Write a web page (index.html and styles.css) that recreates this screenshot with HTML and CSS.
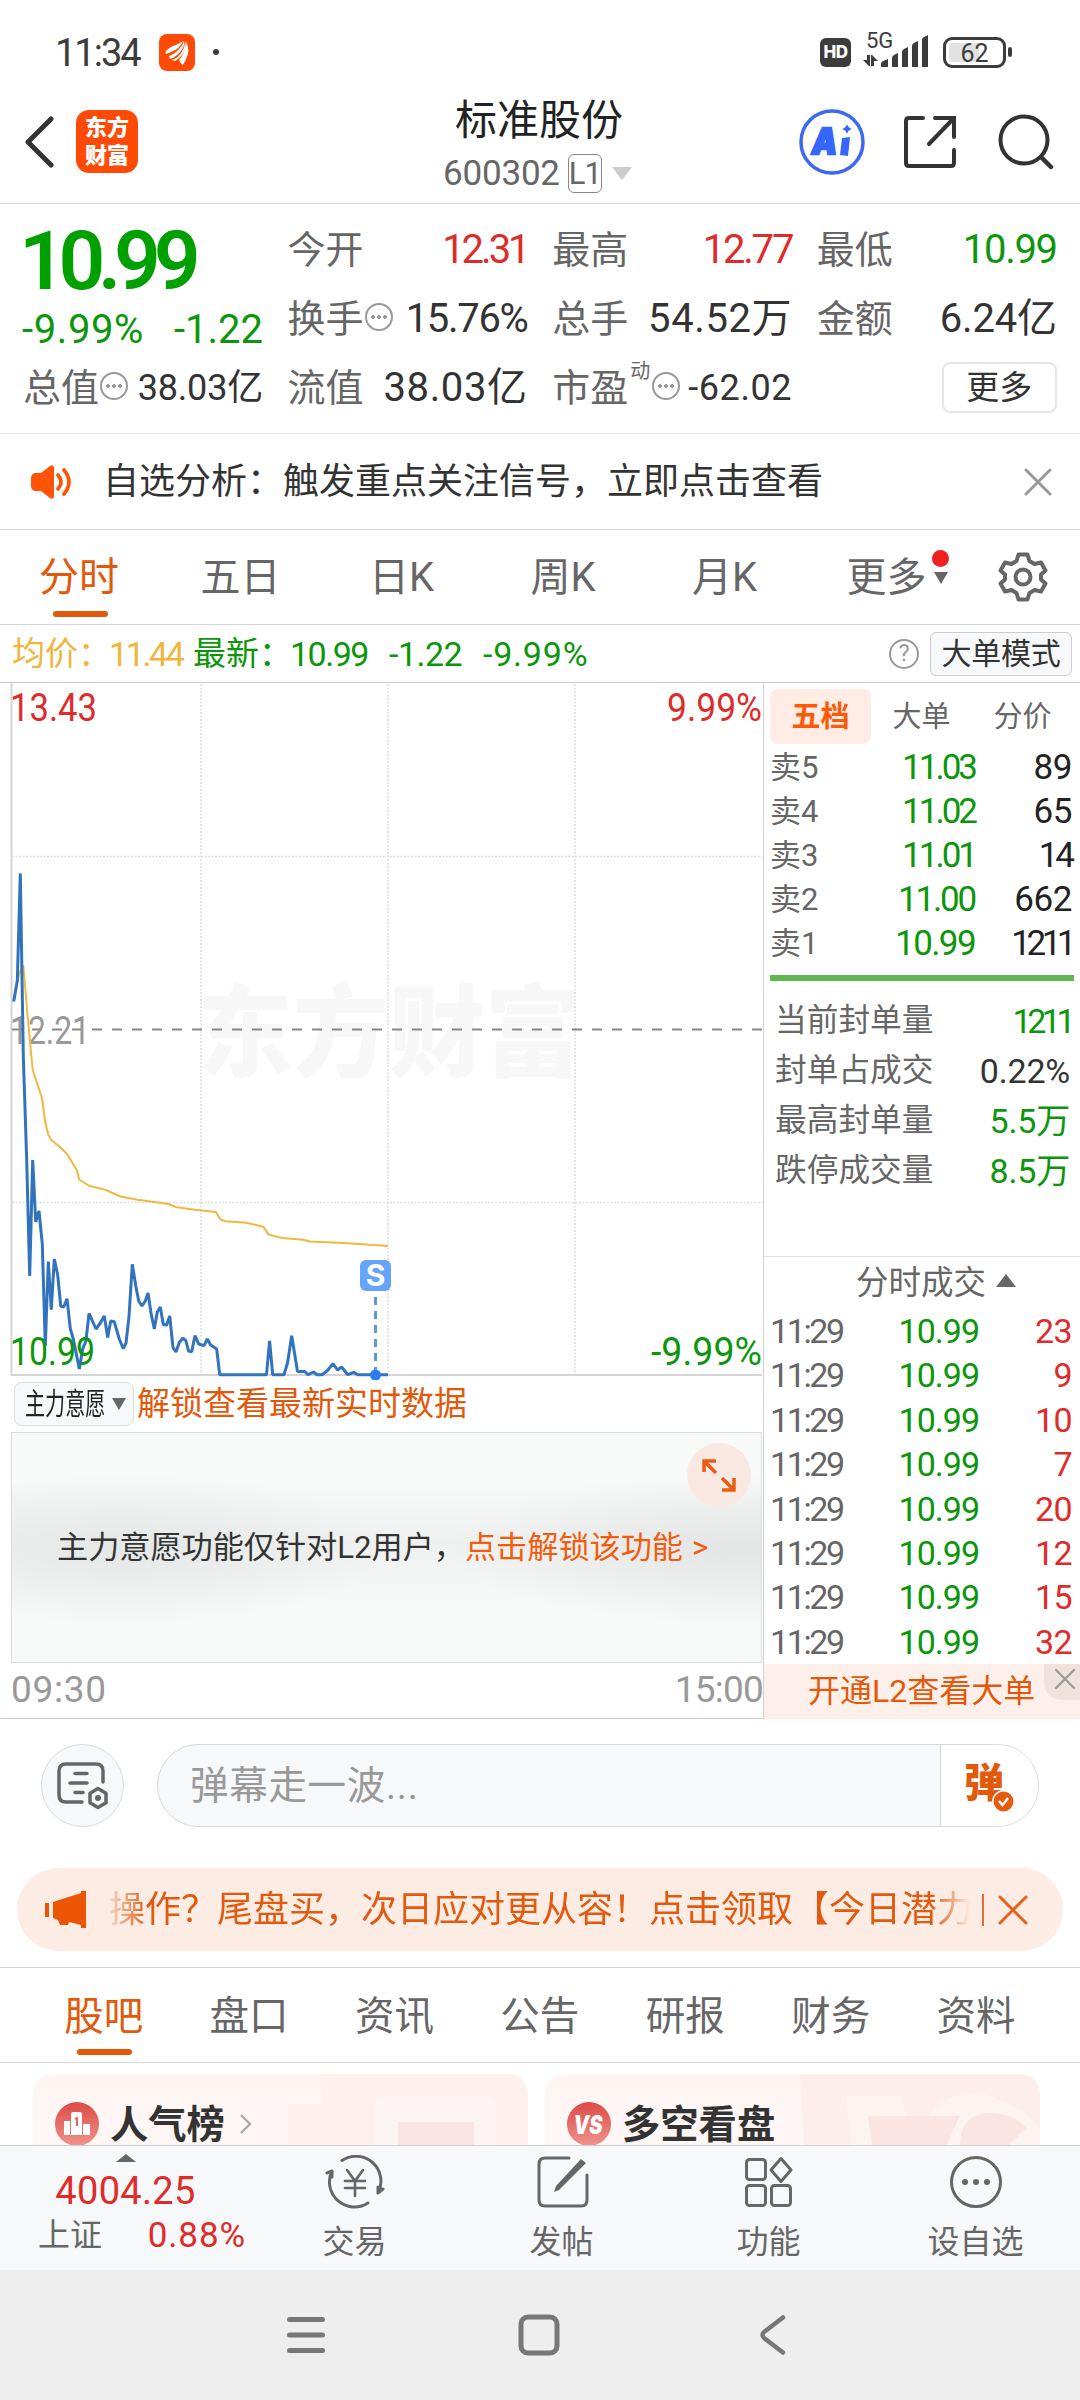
FILE: index.html
```html
<!DOCTYPE html>
<html lang="zh-CN">
<head>
<meta charset="utf-8">
<title>标准股份 600302</title>
<link rel="stylesheet" href="styles.css">
</head>
<body>
<div class="status">
  <span class="clock">11:34</span>
  <svg class="app-mini" width="36" height="37" viewBox="0 0 36 37"><rect width="36" height="37" rx="8" fill="#ff4a05"/><path d="M7 17q2-3 7-5 6-2 10-5-4 8-10 10-4 2-7 3-1-1 0-3z" fill="#fff"/><path d="M10 22q6-2 10-7 4-4 5-8 1 6-4 11-4 5-10 7z" fill="#fff"/><path d="M13 26q6-2 9-7 4-5 4-12 2 6-2 13-4 5-8 7z" fill="#fff"/><path d="M20 26q6-6 7-18 3 5 2 12-2 6-5 11-3-2-4-5z" fill="#fff"/></svg>
  <i class="dot"></i>
  <div class="status-right">
    <span class="hd">HD</span>
    <div class="signal"><span>5G</span>
      <svg width="68" height="42" viewBox="0 0 68 42"><g fill="#3c3c3c"><path d="M5 28h3v11H7l-6-6h4zM9 39V28h1l6 6h-4v5z"/><path d="M19 37q0-2 2-3l5-2v8h-7zM30 31q0-2 2-3l4-2v14h-6zM40 25q0-2 2-3l4-2v20h-6zM50 19q0-2 2-3l4-2v26h-6zM60 13q0-2 2-3l4-2v32h-6z"/></g></svg>
    </div>
    <div class="battery"><span>62</span></div><i class="bat-tip"></i>
  </div>
</div>

<header class="header">
  <svg class="back" width="32" height="54" viewBox="0 0 32 54"><path d="M29 4L6 27l23 23" fill="none" stroke="#333" stroke-width="5" stroke-linecap="round" stroke-linejoin="round"/></svg>
  <div class="logo"><span>东方</span><span>财富</span></div>
  <div class="title">
    <h1>标准股份</h1>
    <div class="code"><span>600302</span><span class="l1">L1</span><i class="tri-down light"></i></div>
  </div>
  <svg class="ai" width="66" height="66" viewBox="0 0 66 66"><circle cx="33" cy="33" r="31" fill="#fff" stroke="#3d69f2" stroke-width="3.5"/><path d="M48 15q1 4 5 5-4 1-5 5-1-4-5-5 4-1 5-5z" fill="#3566fb"/><path d="M43 29l8-1-2 19-8-1z" fill="#3566fb"/><text x="13" y="45" textLength="25" lengthAdjust="spacingAndGlyphs" class="ai-a">A</text></svg>
  <svg class="share" width="54" height="54" viewBox="0 0 54 54"><path d="M20 3H6q-3 0-3 3v42q0 3 3 3h42q3 0 3-3V35M32 3h19v19M50 4L26 29" fill="none" stroke="#333" stroke-width="4" stroke-linecap="round"/></svg>
  <svg class="search" width="56" height="56" viewBox="0 0 56 56"><circle cx="26" cy="26" r="23.5" fill="none" stroke="#333" stroke-width="4"/><path d="M43 43l10 10" stroke="#333" stroke-width="4.5" stroke-linecap="round"/></svg>
</header>

<section class="quote">
  <div class="main-col">
    <div class="price">10.99</div>
    <div class="change"><span class="pct">-9.99%</span><span>-1.22</span></div>
    <div class="cell small"><label>总值</label><i class="more-dot"></i><b>38.03亿</b></div>
  </div>
  <div class="cell"><label>今开</label><b class="up t3">12.31</b></div>
  <div class="cell"><label>最高</label><b class="up t2">12.77</b></div>
  <div class="cell"><label>最低</label><b class="down t1">10.99</b></div>
  <div class="cell"><label>换手</label><i class="more-dot"></i><b class="t1">15.76%</b></div>
  <div class="cell"><label>总手</label><b class="w">54.52万</b></div>
  <div class="cell"><label>金额</label><b>6.24亿</b></div>
  <div class="cell"><label>流值</label><b class="w">38.03亿</b></div>
  <div class="cell small"><label>市盈</label><sup>动</sup><i class="more-dot"></i><b class="w">-62.02</b></div>
  <div class="cell"><button class="more-btn">更多</button></div>
</section>

<section class="notice">
  <svg width="44" height="36" viewBox="0 0 44 36"><path d="M1 14q0-4 4-5h6L20 2q4-2 4 2v28q0 4-4 2l-9-7H5q-4-1-4-5z" fill="#ff5405"/><path d="M28 11q6 7 0 14M34 6q10 12 0 24" fill="none" stroke="#ff5405" stroke-width="3.6" stroke-linecap="round"/></svg>
  <p>自选分析：触发重点关注信号，立即点击查看</p>
  <svg class="close" width="28" height="28" viewBox="0 0 28 28"><path d="M2 2l24 24M26 2L2 26" stroke="#999" stroke-width="3" stroke-linecap="round"/></svg>
</section>

<nav class="period">
  <span class="on">分时</span><span>五日</span><span>日K</span><span>周K</span><span>月K</span>
  <span class="p-more">更多<i class="tri-down"></i><i class="red"></i></span>
  <svg width="50" height="50" viewBox="0 0 50 50"><path d="M20.5 2.500h9l2 6.500 5 3 6.500-1.500 4.500 8-4.500 4v5l4.500 4-4.500 8-6.500-1.500-5 3-2 6.500h-9l-2-6.500-5-3L7 39.500l-4.500-8 4.500-4v-5l-4.500-4 4.500-8 6.500 1.500 5-3z" fill="none" stroke="#666" stroke-width="4" stroke-linejoin="round"/><circle cx="25" cy="25" r="7.500" fill="none" stroke="#666" stroke-width="4"/></svg>
</nav>

<div class="avg">
  <span class="y">均价：</span><span class="y n1">11.44</span><span class="g">最新：</span><span class="g n2">10.99</span><span class="g n3">-1.22</span><span class="g n4">-9.99%</span>
  <span class="q">?</span><button class="mode">大单模式</button>
</div>

<main class="board">
  <div class="left">
    <svg class="chart" width="763" height="698" viewBox="0 682 763 698">
      <text x="197" y="1069" class="wm" textLength="384" lengthAdjust="spacingAndGlyphs">东方财富</text>
      <g stroke="#ddd" stroke-width="1.500" stroke-dasharray="2 1.500"><path d="M201 684v690M388 684v690M575 684v690M12 856.500h750M12 1202.500h750"/></g>
      <path d="M11.500 683v692H762" fill="none" stroke="#d5d5d5" stroke-width="2"/>
      <path d="M12 1029.500H762" stroke="#888" stroke-width="1.800" stroke-dasharray="10 10"/>
      <text x="10" y="1044" class="ax" fill="#999" textLength="80" lengthAdjust="spacingAndGlyphs">12.21</text>
      <path fill="none" stroke="#f0b840" stroke-width="2" stroke-linejoin="round" d="M14 1000L17.300 981 20.300 971 23.400 966 27.500 1015 32.700 1070 42 1098 45 1121 48.200 1134.600 51.700 1140.500 60 1147 67 1154 76.800 1170 79.200 1179.500 89.500 1186 105 1189.600 120.500 1196.500 137.700 1199.800 168.700 1204 175.600 1207 192.800 1209.400 216 1212 220.400 1219.500 225.500 1221.300 246 1222.700 263.400 1226.800 268.600 1234.600 282.400 1238 303 1239.700 310 1241.500 344 1243 388 1246"/>
      <path fill="none" stroke="#3273bd" stroke-width="3" stroke-linejoin="bevel" d="M13.700 1001.500L17.300 981 20.300 873.400 23.300 1056 26.700 1160 29.700 1276 32.700 1160 35.700 1222 39 1211 42.300 1244 45.300 1346 48.300 1261.500 51.300 1309.700 54.300 1259 57.700 1275 60.700 1306 63.700 1307 67 1298.700 70.300 1328.700 73.300 1339 79.300 1369 82.700 1349 86 1340.700 89 1313.500 92 1320 96 1329 100 1323.500 104.300 1316 107.700 1337.600 110.700 1321 114.300 1321.800 119.300 1339 123.300 1348.700 126 1343 129 1316.600 132.300 1264.300 135.700 1285.600 138.700 1301 142 1306 145.300 1301 148 1292.900 151 1313 154.300 1329 157.300 1312 160.300 1307 163.300 1324.600 166.700 1325 169.700 1316 173 1347.600 176 1352 179.300 1342.500 183 1338 186 1341 188.500 1351 191.700 1351.800 195 1335.600 198.700 1344 204 1345.600 207.300 1339 210.700 1345 216.700 1349 219.700 1374.700 266.500 1374.700 269.600 1341 272.700 1374.700 284 1374.700 287.500 1363 291.700 1335.700 297.500 1371.500 304.800 1371.500 308 1374.700 313.700 1372 316.800 1374.700 322 1374.700 327 1371 333 1363.700 337.500 1370 341.600 1367 347.800 1374.700 353.700 1372.400 358 1374.700H388"/>
      <text x="10" y="721" class="ax" fill="#e02b2b" textLength="87" lengthAdjust="spacingAndGlyphs">13.43</text>
      <text x="762" y="721" class="ax" fill="#e02b2b" text-anchor="end" textLength="95" lengthAdjust="spacingAndGlyphs">9.99%</text>
      <text x="10" y="1365" class="ax" fill="#0c960c" textLength="85" lengthAdjust="spacingAndGlyphs">10.99</text>
      <text x="762" y="1365" class="ax" fill="#0c960c" text-anchor="end" textLength="111" lengthAdjust="spacingAndGlyphs">-9.99%</text>
      <path d="M375.500 1297v73" stroke="#5b98e3" stroke-width="3" stroke-dasharray="8 6"/>
      <circle cx="375.500" cy="1375" r="5.500" fill="#2a7cf0"/>
      <rect x="360" y="1260" width="31" height="31" rx="6" fill="#66a3fb"/>
      <text x="375.500" y="1286" class="s" text-anchor="middle">S</text>
    </svg>
    <div class="will"><button><span>主力意愿</span><i class="tri-down"></i></button><em>解锁查看最新实时数据</em></div>
    <div class="lock"><p>主力意愿功能仅针对L2用户，<em>点击解锁该功能</em><em class="gt">&gt;</em></p>
      <svg width="64" height="64" viewBox="0 0 64 64"><circle cx="32" cy="32" r="32" fill="#f9e9e2"/><path d="M17 29V18h12M18 19l11 11M35 47h12V35M46 46L35 35" fill="none" stroke="#ea5c13" stroke-width="3.500"/></svg>
    </div>
    <div class="times"><span>09:30</span><span>15:00</span></div>
  </div>

  <aside class="side">
    <div class="side-tabs"><span class="on">五档</span><span>大单</span><span>分价</span></div>
    <div class="asks">
      <div><label>卖5</label><b class="t3">11.03</b><i>89</i></div>
      <div><label>卖4</label><b class="t3">11.02</b><i>65</i></div>
      <div><label>卖3</label><b class="t3">11.01</b><i class="t3">14</i></div>
      <div><label>卖2</label><b class="t2">11.00</b><i>662</i></div>
      <div><label>卖1</label><b>10.99</b><i class="t4">1211</i></div>
    </div>
    <div class="bar"></div>
    <div class="stats">
      <div><label>当前封单量</label><b class="t4">1211</b></div>
      <div><label>封单占成交</label><b class="k">0.22%</b></div>
      <div><label>最高封单量</label><b>5.5万</b></div>
      <div><label>跌停成交量</label><b>8.5万</b></div>
    </div>
    <div class="deal-head">分时成交<i class="tri-up"></i></div>
    <div class="deals">
      <div><label>11:29</label><b>10.99</b><i>23</i></div>
      <div><label>11:29</label><b>10.99</b><i>9</i></div>
      <div><label>11:29</label><b>10.99</b><i>10</i></div>
      <div><label>11:29</label><b>10.99</b><i>7</i></div>
      <div><label>11:29</label><b>10.99</b><i>20</i></div>
      <div><label>11:29</label><b>10.99</b><i>12</i></div>
      <div><label>11:29</label><b>10.99</b><i>15</i></div>
      <div><label>11:29</label><b>10.99</b><i>32</i></div>
    </div>
    <div class="l2">开通L2查看大单<svg width="36" height="36" viewBox="0 0 36 36"><path d="M0 0h36v36H20Q0 36 0 16z" fill="#efe1db"/><path d="M12 6l18 18M30 6L12 24" stroke="#999" stroke-width="2.200" stroke-linecap="round"/></svg></div>
  </aside>
</main>

<section class="danmu">
  <div class="round"><svg width="54" height="50" viewBox="0 0 54 50"><path d="M47 21V10q0-7-7-7H10Q3 3 3 10v24q0 7 7 7h16M19 12.500h12M14 22h17M19 31.500h8" fill="none" stroke="#666" stroke-width="3.500" stroke-linecap="round"/><path d="M42 27.500l8 4.700v9.600l-8 4.700-8-4.700v-9.600z" fill="#f7f8fa" stroke="#666" stroke-width="3.500" stroke-linejoin="round"/><circle cx="42" cy="37" r="3" fill="#666"/></svg></div>
  <div class="input"><span>弹幕走一波...</span><div class="dan"><b>弹</b><svg width="23" height="23" viewBox="0 0 23 23"><circle cx="11.500" cy="11.500" r="10.700" fill="#e85a0c" stroke="#fff" stroke-width="1.500"/><path d="M7 11l3.500 4 5.500-7" fill="none" stroke="#fff" stroke-width="2.500"/></svg></div></div>
</section>

<section class="promo">
  <svg width="42" height="38" viewBox="0 0 42 38"><path d="M0 12h4v14H0zM8 11l28-9V0h5v37h-5v-3l-12-3-1 3H15l-2-5-5-2z" fill="#ec5504"/></svg>
  <div class="marquee">操作？尾盘买，次日应对更从容！点击领取【今日潜力</div>
  <i class="sep"></i>
  <svg width="30" height="30" viewBox="0 0 30 30"><path d="M2 2l26 26M28 2L2 28" stroke="#e8611a" stroke-width="3" stroke-linecap="round"/></svg>
</section>

<nav class="info"><span class="on">股吧</span><span>盘口</span><span>资讯</span><span>公告</span><span>研报</span><span>财务</span><span>资料</span></nav>

<section class="cards">
  <div class="card">
    <svg class="deco" width="240" height="72" viewBox="0 0 240 72"><path d="M0 30h34V0h206v72H0z" fill="#fdf0ed"/><path d="M87 72V30q0-8 8-8h105q8 0 8 8v42z" fill="#fdf5f3"/><path d="M110 48h76v24h-76z" fill="#fbe4e1"/></svg>
    <svg width="44" height="44" viewBox="0 0 44 44"><defs><linearGradient id="rg" x2="0" y2="1"><stop stop-color="#dd4a46"/><stop offset="1" stop-color="#f0938c"/></linearGradient></defs><circle cx="22" cy="22" r="22" fill="url(#rg)"/><path d="M9 19h6v14H9zM16 12q0-2 2-2h7q2 0 2 2v21H16zM28 22h7v11h-7z" fill="#fff"/><path d="M20 17l2-1v8" fill="none" stroke="#e26a65" stroke-width="2"/></svg>
    <b>人气榜</b><svg class="chev" width="14" height="22" viewBox="0 0 14 22"><path d="M2 2l9 9-9 9" fill="none" stroke="#aaa" stroke-width="2.400"/></svg>
  </div>
  <div class="card">
    <svg class="deco" width="240" height="72" viewBox="0 0 240 72"><path d="M0 0h240v72H4z" fill="#fdeeeb"/><path d="M46 22h55l12 50H52zM120 72q8-60 68-51l18 8q24 8 34 28v15z" fill="#fdf4f2"/><path d="M68 42h92l-14 30H72zM160 72q0-34 32-33 24 1 34 15l-18 18z" fill="#fbe5e2"/></svg>
    <svg width="44" height="44" viewBox="0 0 44 44"><circle cx="22" cy="22" r="22" fill="url(#rg)"/><text x="21" y="32" class="vs" text-anchor="middle" textLength="29" lengthAdjust="spacingAndGlyphs">VS</text></svg>
    <b>多空看盘</b>
  </div>
</section>

<footer class="dock">
  <div class="index"><i class="tri-up"></i><strong>4004.25</strong><div><label>上证</label><b>0.88%</b></div></div>
  <div class="item"><svg width="60" height="54" viewBox="0 0 60 54"><g fill="none" stroke="#666" stroke-width="3" stroke-linecap="round"><path d="M17 5.500A25 25 0 0 1 53 38M53 38V32M53 38l5-4M43 48A25 25 0 0 1 7 16M7 16l-5 2M7 16v6"/><path d="M22 15l8 11 8-11M20 26h20M20 33h20M30 26v15" stroke-width="2.600"/></g></svg><span>交易</span></div>
  <div class="item"><svg width="54" height="54" viewBox="0 0 54 54"><path d="M34 3H10q-6 0-6 6v36q0 6 6 6h36q6 0 6-6V20" fill="none" stroke="#666" stroke-width="3" stroke-linecap="round"/><path d="M46 4l5 4-27 27-5 2 2-6z" fill="#666"/></svg><span>发帖</span></div>
  <div class="item"><svg width="54" height="54" viewBox="0 0 54 54"><g fill="none" stroke="#666" stroke-width="3"><rect x="4.500" y="4.500" width="19" height="20" rx="3"/><rect x="4.500" y="30.500" width="19" height="20" rx="3"/><rect x="29.500" y="30.500" width="19" height="20" rx="3"/><path d="M39 3.500l10 11.500-10 11.500L29 15z" stroke-linejoin="round"/></g></svg><span>功能</span></div>
  <div class="item"><svg width="54" height="54" viewBox="0 0 54 54"><circle cx="27" cy="27" r="24.500" fill="none" stroke="#666" stroke-width="3"/><g fill="#666"><circle cx="16" cy="27" r="3"/><circle cx="27" cy="27" r="3"/><circle cx="38" cy="27" r="3"/></g></svg><span>设自选</span></div>
</footer>

<div class="sysnav">
  <svg width="1080" height="131" viewBox="0 0 1080 131"><g fill="none" stroke="#777" stroke-width="5" stroke-linecap="round" stroke-linejoin="round"><path d="M289.500 49.500h33M289.500 65h33M289.500 80.500h33"/><rect x="521" y="47" width="36" height="36" rx="7"/><path d="M783 47.500L764 62q-3 3 0 6l19 14.500" stroke-width="4.500"/></g></svg>
</div>
</body>
</html>
```
FILE: styles.css
```css
* { box-sizing: border-box; margin: 0; padding: 0; }
body { width: 1080px; height: 2400px; overflow: hidden; background: #fff; color: #333; font-family: Roboto, "Noto Sans CJK SC", sans-serif; font-size: 40px; line-height: 44px; white-space: nowrap; }
i, em { font-style: normal; }
b { font-weight: 400; }
svg { display: block; flex: none; }
button { font: inherit; color: inherit; background: none; border: 0; }
.up { color: #e02b2b !important; }
.down { color: #0c960c !important; }
.t1.t1.t1 { letter-spacing: -1.300px; }
.t2.t2.t2 { letter-spacing: -2.200px; }
.t3.t3.t3 { letter-spacing: -3px; }
.t4.t4.t4 { letter-spacing: -4.500px; }
.tri-down { width: 0; height: 0; border: 7px solid transparent; border-top: 12px solid #666; border-bottom: 0; }
.tri-down.light { border-width: 13px 10px 0; border-top-color: #ccc; margin-left: 10px; }
.tri-up { width: 0; height: 0; border: 10px solid transparent; border-bottom: 13px solid #666; border-top: 0; }

.status { height: 104px; display: flex; align-items: center; padding-left: 55px; color: #3c3c3c; }
.clock { font-size: 38px; width: 104px; letter-spacing: -2px; padding-top: 1px; }
.dot { width: 6px; height: 6px; border-radius: 50%; background: #3c3c3c; margin-left: 18px; }
.status-right { margin-left: auto; display: flex; align-items: center; padding-right: 68px; height: 42px; }
.hd { width: 31px; height: 29px; border-radius: 6px; background: #3c3c3c; color: #fff; font: 800 17px/29px Inter, sans-serif; text-align: center; letter-spacing: -.5px; margin-right: 11px; margin-top: 1px; }
.signal { position: relative; width: 68px; height: 42px; margin-right: 13px; margin-top: -10px; padding-top: 10px; }
.signal svg { margin-top: -10px; }
.signal span { position: absolute; left: 4px; top: 4px; font-size: 22px; line-height: 22px; }
.signal svg { margin-top: -9px; }
.battery { width: 63px; height: 31px; border: 3px solid #3c3c3c; border-radius: 9px; padding: 3px; font-size: 25px; line-height: 21px; text-align: center; }
.battery span { display: block; background: linear-gradient(90deg, #e2e2e2 58%, #fff 58%); border-radius: 3px; height: 19px; }
.bat-tip { width: 4px; height: 10px; border-radius: 2px; background: #3c3c3c; margin-left: 2px; }

.header { height: 100px; border-bottom: 1px solid #d6d6d6; display: flex; position: relative; padding-left: 22px; }
.back { margin-top: 11px; }
.logo { width: 62px; height: 63px; margin: 6px 0 0 22px; border-radius: 13px; background: #ff4a05; color: #fff; font-size: 22px; font-weight: 900; display: flex; flex-direction: column; align-items: center; padding-top: 4px; line-height: 28px; }
.title { flex: 1; padding-left: 305px; }
.title h1 { font-size: 42px; font-weight: 400; line-height: 44px; margin-top: -5px; padding-left: 12px; color: #222; }
.code { display: flex; align-items: center; color: #666; font-size: 35px; line-height: 38px; margin-top: 10px; letter-spacing: -.2px; padding-top: 1px; }
.l1 { border: 1.500px solid #888; border-radius: 6px; width: 34px; height: 39px; font-size: 31px; line-height: 37px; letter-spacing: -1px; text-align: center; margin-left: 8px; }
.ai { margin-top: 5px; }
.ai-a { font: 900 36px Inter, sans-serif; fill: #3566fb; stroke: #3566fb; stroke-width: 2.500; font-style: italic; }
.share { margin: 11px 0 0 38px; }
.search { margin: 10px 26px 0 41px; }

.quote { height: 230px; padding: 11px 22px 0 24px; border-bottom: 1px solid #e8e8e8; display: grid; grid-template-columns: repeat(4, 239px); grid-template-rows: repeat(3, 69px); column-gap: 25.600px; }
.main-col { grid-row: 1 / 4; display: flex; flex-direction: column; color: #0c960c; }
.price { height: 92px; line-height: 92px; font-size: 82px; font-weight: 600; letter-spacing: -7.300px; margin-left: -5px; color: #00a000; }
.change { height: 46px; line-height: 46px; display: flex; justify-content: space-between; margin-left: -2px; }
.change .pct { letter-spacing: .6px; }
.cell { height: 69px; display: flex; align-items: center; color: #333; }
.cell label { color: #666; font-size: 38px; margin-left: -1px; width: 76px; }
.cell b { margin-left: auto; letter-spacing: -.2px; }
.cell.small b { font-size: 36px; }
.cell b.w { letter-spacing: .6px; }
.cell sup { font-size: 20px; line-height: 20px; align-self: flex-start; margin: 8px 0 0 2px; width: 21px; color: #666; }
.more-dot { width: 28px; height: 28px; border: 2px solid #999; border-radius: 50%; background: radial-gradient(circle 2px at 6px 12px, #999 90%, transparent), radial-gradient(circle 2px at 12px 12px, #999 90%, transparent), radial-gradient(circle 2px at 18px 12px, #999 90%, transparent); margin-top: -4px; margin-left: 1px; }
.more-btn { margin-left: auto; width: 115px; height: 51px; border: 2px solid #e6e6e6; border-radius: 8px; font-size: 33px; line-height: 47px; margin-top: -1px; }

.notice { height: 96px; border-bottom: 1px solid #d6d6d6; display: flex; align-items: center; padding-left: 30px; }
.notice p { font-size: 36px; margin-left: 29px; flex: 1; padding-top: 1px; }
.notice .close { margin-right: 28px; }

.period { height: 95px; border-bottom: 1px solid #d6d6d6; display: flex; align-items: center; color: #666; font-size: 40px; padding-left: 39px; }
.period > span { width: 161.500px; position: relative; line-height: 96px; height: 94px; }
.period .on { color: #e2590c; }
.period .on::after { content: ""; position: absolute; left: 14px; bottom: 7px; width: 55px; height: 6px; border-radius: 3px; background: #e2590c; }
.period span:nth-child(3), .period span:nth-child(4) , .period span:nth-child(5) { padding-left: 7px; }
.period .p-more { width: 151px; }
.p-more .tri-down { position: absolute; left: 87px; top: 42px; }
.p-more .red { position: absolute; left: 85px; top: 20px; width: 17px; height: 17px; border-radius: 50%; background: #f02020; }

.avg { height: 58px; border-bottom: 1px solid #ccc; display: flex; align-items: center; padding-left: 12px; font-size: 34px; letter-spacing: -.5px; }
.avg .y { color: #f0b53c; }
.avg .g { color: #0c960c; }
.avg span:nth-child(1), .avg span:nth-child(3) { font-size: 33px; letter-spacing: 0; width: 97px; padding-top: 1px; }
.avg .n1 { width: 84px; letter-spacing: -2.400px; }
.avg .n2 { width: 99px; letter-spacing: -1.500px; }
.avg .n3 { width: 94px; }
.avg .n4 { width: 105px; letter-spacing: .8px; }
.avg .q { width: 30px; height: 30px; border: 2px solid #999; border-radius: 50%; font-size: 23px; line-height: 26px; color: #999; text-align: center; margin-left: auto; }
.mode { width: 142px; height: 44px; border: 1px solid #ccc; border-radius: 6px; background: #f7f8fa; font-size: 30px; line-height: 40px; margin: 0 8px 0 11px; letter-spacing: -.3px; }

.board { height: 1036px; border-bottom: 1px solid #ccc; display: grid; grid-template-columns: 763px 317px; }
.chart { margin-top: -1px; }
.wm { font: 900 100px "Noto Sans CJK SC", sans-serif; fill: #f7f7f7; }
.ax { font-size: 38px; }
.s { font: 700 30px Inter, sans-serif; fill: #fff; }
.will { height: 52px; display: flex; padding: 2px 0 0 14px; }
.will button { width: 120px; height: 44px; border: 1px solid #dcdfe3; border-radius: 8px; background: #f7f8fa; display: flex; align-items: center; padding-left: 10px; }
.will button span { font-size: 30px; transform: scaleX(.67); transform-origin: 0 50%; width: 87px; letter-spacing: 0; color: #222; text-align: left; }
.will em { font-size: 33px; color: #e2590c; margin-left: 3px; }
.lock { height: 231px; margin: 0 1px 0 11px; border: 1px solid #ddd; position: relative; background: radial-gradient(ellipse 260px 75px at 110px 116px, #e6e8e7, transparent), radial-gradient(ellipse 300px 75px at 740px 116px, #e4e6e5, transparent), linear-gradient(#f8f9f9 20%, #eff1f0 48%, #f7f8f8 75%); }
.lock p { line-height: 229px; padding-left: 45px; font-size: 31.150px; letter-spacing: 0; }
.lock em { color: #f25c0c; }
.lock .gt { margin-left: 9px; }
.lock svg { position: absolute; left: 675px; top: 10px; }
.times { height: 54px; display: flex; justify-content: space-between; align-items: center; padding: 0 0 0 11px; color: #999; font-size: 37px; }
.times span:first-child { letter-spacing: .7px; }
.times span:last-child { letter-spacing: -.8px; }

.side { border-left: 1px solid #d0d0d0; display: flex; flex-direction: column; }
.side-tabs { display: flex; margin: 6px 0 0 6px; height: 55px; font-size: 29px; color: #666; text-align: center; line-height: 56px; }
.side-tabs span { width: 101px; }
.side-tabs .on { background: #ffece4; border-radius: 8px; color: #fa5a0a; font-weight: 700; }
.asks { height: 231px; padding-top: 2px; }
.asks div, .deals div { display: grid; grid-template-columns: 80px 125px 1fr; padding: 0 8px 0 6px; line-height: 44px; font-size: 35px; }
.asks label { color: #666; font-size: 31px; }
.asks b, .deals b { color: #0c960c; text-align: right; letter-spacing: -1.600px; }
.asks i { text-align: right; letter-spacing: -.4px; color: #222; }
.bar { height: 6px; background: #62b74f; margin: 0 6px; }
.stats { height: 276px; padding-top: 15px; border-bottom: 1px solid #e5e5e5; }
.stats div { display: flex; justify-content: space-between; line-height: 50px; padding: 0 10px 0 11px; font-size: 34px; }
.stats label { font-size: 31.700px; color: #666; }
.stats b { color: #0c960c; letter-spacing: -.2px; }
.stats .t4 { margin-right: -1px; }
.stats .k { color: #333; }
.deal-head { height: 52px; line-height: 54px; font-size: 32.500px; color: #666; display: flex; align-items: center; padding-left: 92px; }
.deal-head .tri-up { margin: -6px 0 0 10px; }
.deals { height: 355px; }
.deals div { font-size: 34px; line-height: 44.400px; grid-template-columns: 80px 129px 1fr; }
.deals label { color: #666; letter-spacing: -2.400px; }
.deals b { letter-spacing: -1px; }
.deals i { color: #e02b2b; text-align: right; letter-spacing: -.6px; }
.l2 { flex: 1; background: #fdf0ea; color: #e2590c; font-size: 32px; line-height: 55px; padding-left: 44px; position: relative; }
.l2 svg { position: absolute; right: 0; top: 0; }

.danmu { height: 149px; padding: 25px 41px 0; display: flex; }
.round { width: 83px; height: 83px; border: 1px solid #d8dbe0; border-radius: 50%; background: #f7f8fa; display: flex; justify-content: center; align-items: center; margin-right: 33px; }
.input { width: 882px; height: 83px; border: 1.500px solid #d5d8de; border-radius: 42px; background: #f7f8fa; overflow: hidden; display: flex; justify-content: space-between; line-height: 81px; color: #999; font-size: 38.500px; letter-spacing: .7px; padding-left: 32px; }
.dan { width: 98px; border-left: 1px solid #d5d8de; background: #fff; position: relative; padding-left: 23px; line-height: 78px; font-size: 40px; }
.dan b { font-weight: 900; color: #e2590c; }
.dan svg { position: absolute; left: 51px; top: 45px; }

.promo { height: 83px; width: 1046px; margin-left: 17px; border-radius: 42px; background: #fcece3; display: flex; align-items: center; padding-left: 28px; color: #e05a10; }
.marquee { width: 872px; padding-left: 7px; margin-left: 15px; font-size: 36px; line-height: 54px; -webkit-mask-image: linear-gradient(90deg, transparent, #000 46px, #000 830px, transparent 868px); mask-image: linear-gradient(90deg, transparent, #000 46px, #000 830px, transparent 868px); }
.sep { width: 1.500px; height: 32px; background: #e0703a; margin: 0 14px 0 8px; }

.info { height: 96px; margin-top: 16px; border-top: 1px solid #d6d6d6; border-bottom: 1px solid #d6d6d6; display: flex; padding-left: 31px; font-size: 39.500px; line-height: 97px; color: #666; }
.info span { width: 145.400px; text-align: center; position: relative; }
.info .on { color: #e2590c; }
.info .on::after { content: ""; position: absolute; left: 46px; top: 81px; width: 55px; height: 6px; border-radius: 3px; background: #e2590c; }

.cards { height: 82px; overflow: hidden; padding: 11px 33px 0; display: flex; gap: 17px; }
.card { width: 495px; height: 100px; border-radius: 20px; background: linear-gradient(#fef5f3, #fef8f6); position: relative; display: flex; padding: 28px 0 0 22px; overflow: hidden; }
.card .deco { position: absolute; right: 0; top: 0; }
.card > svg + svg { position: relative; }
.card b { font-size: 38.300px; font-weight: 700; margin-left: 11px; line-height: 45px; position: relative; }
.card .chev { margin: 11px 0 0 14px; }
.vs { font: italic 900 26px Inter, sans-serif; fill: #fff; }

.dock { height: 125px; border-top: 1px solid #d0d0d0; background: #f7f8fa; display: grid; grid-template-columns: 251px repeat(4, 207px); color: #666; }
.index { display: flex; flex-direction: column; align-items: center; }
.index .tri-up { border-width: 0 10px 8px; margin-top: 8px; }
.index strong { font-weight: 400; font-size: 38px; color: #e02b2b; line-height: 44px; margin-top: 7px; letter-spacing: .3px; }
.index div { display: flex; justify-content: space-between; align-self: stretch; padding: 0 5px 0 38px; font-size: 32px; }
.index b { color: #e02b2b; font-size: 35px; letter-spacing: .9px; padding-top: 1px; }
.item { display: flex; flex-direction: column; align-items: center; font-size: 32px; padding-top: 9px; line-height: 40px; }
.item span { margin-top: 13px; }
.sysnav { height: 131px; background: #eee; }
```
